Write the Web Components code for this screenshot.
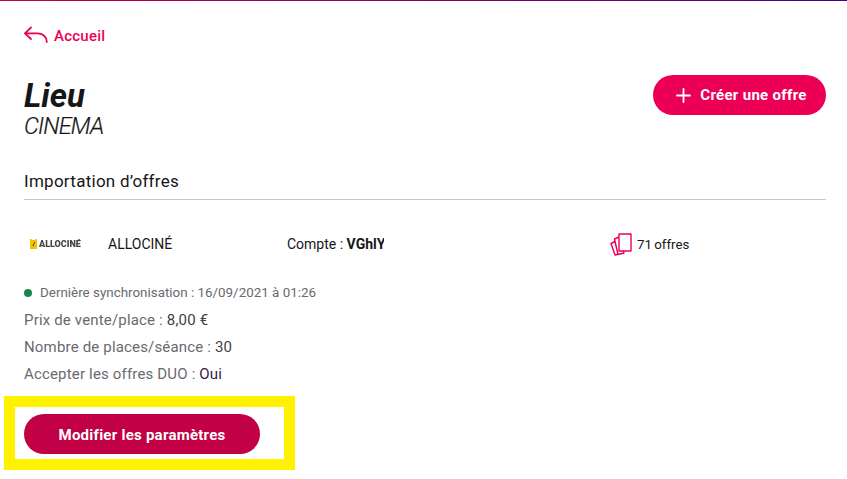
<!DOCTYPE html>
<html lang="fr">
<head>
<meta charset="utf-8">
<title>Lieu</title>
<style>
  html, body { margin: 0; height: 100%; background: #fff; overflow: hidden; }
  body { font-family: Roboto, "Liberation Sans", sans-serif; color: #161617; }
</style>
</head>
<body>
<top-bar></top-bar>
<venue-page>
  <back-link slot="back">Accueil</back-link>
  <page-title slot="title" name="Lieu" sub="CINEMA"></page-title>
  <pill-button slot="action" plus>Créer une offre</pill-button>
  <section-title slot="section">Importation d’offres</section-title>
  <provider-row slot="provider"></provider-row>
  <sync-info slot="info"></sync-info>
  <highlight-box slot="settings"><pill-button dark>Modifier les paramètres</pill-button></highlight-box>
</venue-page>

<script>
class TopBar extends HTMLElement {
  constructor() {
    super();
    this.attachShadow({ mode: "open" }).innerHTML = `
      <style>
        :host { display: block; height: 1px; background: linear-gradient(90deg, #c1004a, #4a0080); }
      </style>`;
  }
}
customElements.define("top-bar", TopBar);

class VenuePage extends HTMLElement {
  constructor() {
    super();
    this.attachShadow({ mode: "open" }).innerHTML = `
      <style>
        :host { display: block; padding: 23px 21px 0 24px; }
        .head { display: flex; justify-content: space-between; align-items: flex-start; margin-top: 27px; }
      </style>
      <slot name="back"></slot>
      <div class="head">
        <slot name="title"></slot>
        <slot name="action"></slot>
      </div>
      <slot name="section"></slot>
      <slot name="provider"></slot>
      <slot name="info"></slot>
      <slot name="settings"></slot>`;
  }
}
customElements.define("venue-page", VenuePage);

class BackLink extends HTMLElement {
  constructor() {
    super();
    this.attachShadow({ mode: "open" }).innerHTML = `
      <style>
        :host { display: flex; align-items: center; gap: 6px; height: 24px; color: #eb0055; font-size: 15px; font-weight: 500; letter-spacing: .25px; }
        svg { display: block; }
      </style>
      <svg width="24" height="20" viewBox="0 0 24 20" fill="none" stroke="#eb0055" stroke-width="1.8" stroke-linecap="round" stroke-linejoin="round">
        <path d="M7 1.5.9 7.3 7 13M1 7.3h12c6 0 9.5 3.2 9.8 8.7"/>
      </svg>
      <span><slot></slot></span>`;
  }
}
customElements.define("back-link", BackLink);

class PageTitle extends HTMLElement {
  constructor() {
    super();
    this.attachShadow({ mode: "open" }).innerHTML = `
      <style>
        :host { display: block; font-style: italic; padding-top: 3px; }
        .name { font-size: 33px; font-weight: 700; line-height: 35px; }
        .sub { font-size: 23.5px; font-weight: 300; line-height: 26px; letter-spacing: -.8px; -webkit-text-stroke: .2px #161617; }
      </style>
      <div class="name">${this.getAttribute("name")}</div>
      <div class="sub">${this.getAttribute("sub")}</div>`;
  }
}
customElements.define("page-title", PageTitle);

class PillButton extends HTMLElement {
  constructor() {
    super();
    const dark = this.hasAttribute("dark");
    const plus = this.hasAttribute("plus");
    this.attachShadow({ mode: "open" }).innerHTML = `
      <style>
        :host { display: inline-flex; align-items: center; justify-content: center; box-sizing: border-box;
          height: 40px; border-radius: 20px; color: #fff; font-size: 15px; font-weight: 700;
          letter-spacing: ${dark ? ".25px" : ".3px"}; padding-left: ${plus ? 4 : 0}px; padding-top: ${dark ? 2 : 0}px;
          background: ${dark ? "#c10046" : "#eb0055"}; width: ${dark ? 236 : 173}px; gap: 9px; }
        svg { display: block; }
      </style>
      ${plus ? `<svg width="15" height="15" viewBox="0 0 15 15" stroke="#fff" stroke-width="1.8" stroke-linecap="round"><path d="M7.5 1v13M1 7.5h13"/></svg>` : ""}
      <span><slot></slot></span>`;
  }
}
customElements.define("pill-button", PillButton);

class SectionTitle extends HTMLElement {
  constructor() {
    super();
    this.attachShadow({ mode: "open" }).innerHTML = `
      <style>
        :host { display: block; margin-top: 30px; padding-bottom: 6px; border-bottom: 1px solid #c7c8ca; font-size: 17px; letter-spacing: .27px; line-height: 24px; }
      </style>
      <slot></slot>`;
  }
}
customElements.define("section-title", SectionTitle);

class ProviderRow extends HTMLElement {
  constructor() {
    super();
    this.attachShadow({ mode: "open" }).innerHTML = `
      <style>
        :host { display: flex; align-items: center; height: 24px; margin-top: 32px; font-size: 14px; }
        .logo { width: 84px; display: flex; align-items: center; gap: 2px; padding-left: 6px; box-sizing: border-box;
          font-size: 9px; font-weight: 900; color: #444; filter: blur(.35px); }
        .logo svg { display: block; flex: none; }
        .name { width: 179px; }
        .account { width: 97px; overflow: hidden; white-space: nowrap; }
        .account b { font-weight: 700; }
        .gap { width: 226px; }
        .count { display: flex; align-items: center; gap: 5px; font-size: 13.3px; }
        .count span { word-spacing: -1px; }
        .count svg { display: block; }
      </style>
      <div class="logo">
        <svg width="7" height="10" viewBox="0 0 7 10"><path d="M0 0h1.5L2 1h3l.5-1H7v10H0z" fill="#f5c400"/><path d="M4.5 2.5 2.5 7l1 .4L5 3z" fill="#5a4a00"/></svg>
        <span>ALLOCINÉ</span>
      </div>
      <div class="name">ALLOCINÉ</div>
      <div class="account">Compte : <b>VGhlYXRlcjox</b></div>
      <div class="gap"></div>
      <div class="count">
        <svg width="22" height="24" viewBox="0 0 22 24" fill="#fff" stroke="#eb0055" stroke-width="1.4" stroke-linejoin="round">
          <path d="M1 11.5 5 9.5 9 22 5 23z"/>
          <path d="M4.5 7 9 5 14 21 8 22.5z"/>
          <path d="M9 2h12v17H9z"/>
        </svg>
        <span>71 offres</span>
      </div>`;
  }
}
customElements.define("provider-row", ProviderRow);

class SyncInfo extends HTMLElement {
  constructor() {
    super();
    this.attachShadow({ mode: "open" }).innerHTML = `
      <style>
        :host { display: block; margin-top: 23px; font-size: 15px; letter-spacing: .17px; line-height: 27px; color: #696a6f; }
        .sync { display: flex; align-items: center; gap: 8px; height: 27px; margin-bottom: 1px; font-size: 13.4px; letter-spacing: 0; }
        .dot { width: 8px; height: 8px; border-radius: 50%; background: #158a4e; }
        b { font-weight: 400; color: #3e3f44; }
        .yes { font-weight: 400; color: #35184f; }
      </style>
      <div class="sync"><span class="dot"></span><span>Dernière synchronisation : 16/09/2021 à 01:26</span></div>
      <div>Prix de vente/place : <b>8,00 €</b></div>
      <div>Nombre de places/séance : <b>30</b></div>
      <div>Accepter les offres DUO : <span class="yes">Oui</span></div>`;
  }
}
customElements.define("sync-info", SyncInfo);

class HighlightBox extends HTMLElement {
  constructor() {
    super();
    this.attachShadow({ mode: "open" }).innerHTML = `
      <style>
        :host { display: block; box-sizing: border-box; width: 291px; height: 74px; margin: 8px 0 0 -20px;
          border: 11px solid #fff200; padding: 7px 0 0 9px; }
      </style>
      <slot></slot>`;
  }
}
customElements.define("highlight-box", HighlightBox);
</script>
</body>
</html>
